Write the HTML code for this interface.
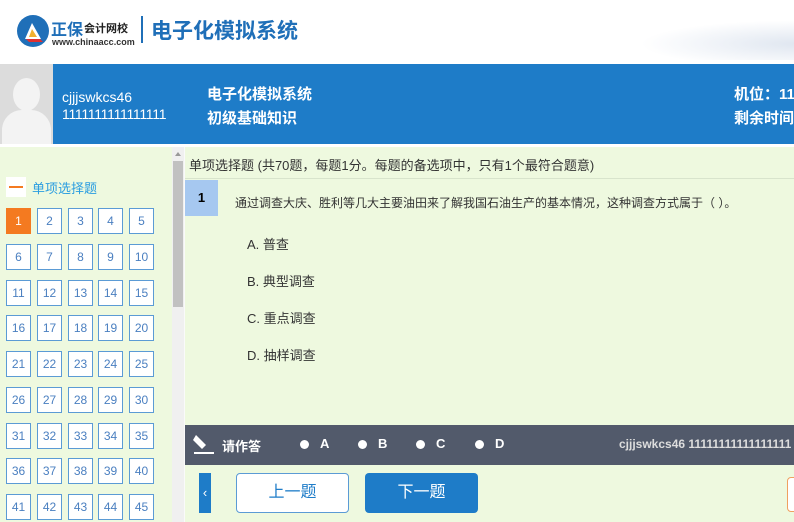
<!DOCTYPE html>
<html><head><meta charset="utf-8"><style>
*{margin:0;padding:0;box-sizing:border-box}
body{width:794px;height:522px;overflow:hidden;background:#eef9df;font-family:"Liberation Sans","Noto Sans CJK SC",sans-serif;position:relative}
.a{position:absolute}
.cell{position:absolute;width:25px;height:26px;border:1px solid #5b9bd5;background:#fff;color:#4a7fc0;font-size:12px;text-align:center;line-height:24px}
.cell.on{background:#f47a20;border-color:#f47a20;color:#fff}
.opt{position:absolute;left:247px;font-size:13px;color:#333}
.rad{position:absolute;top:440px;width:9px;height:9px;border-radius:50%;background:#fff}
.rl{position:absolute;top:436px;color:#fff;font-size:13px;font-weight:bold}
</style></head><body>
<div class="a" style="left:0;top:0;width:794px;height:64px;background:#fff"></div>
<div class="a" style="left:640px;top:20px;width:200px;height:40px;background:radial-gradient(ellipse at 80% 60%,#dfe6f0,rgba(255,255,255,0) 70%)"></div>
<svg class="a" style="left:17px;top:15px" width="32" height="32" viewBox="0 0 32 32"><circle cx="16" cy="16" r="16" fill="#1f6fb8"/><path d="M8 24 L15 8 L24 24 Z" fill="#fff"/><path d="M12 22 L15 14 L20 22Z" fill="#f0b030"/><path d="M9 24 L23 24 L26 27 L12 27Z" fill="#e03030"/></svg>
<div class="a" style="left:51px;top:16px;font-size:16px;font-weight:bold;color:#1f6fb8">正保</div>
<div class="a" style="left:84px;top:20px;font-size:11px;font-weight:bold;color:#222">会计网校</div>
<div class="a" style="left:52px;top:37px;font-size:9px;font-weight:bold;color:#333">www.chinaacc.com</div>
<div class="a" style="left:141px;top:16px;width:2px;height:27px;background:#1f6fb8"></div>
<div class="a" style="left:151px;top:15px;font-size:21px;font-weight:bold;color:#1f6fb8">电子化模拟系统</div>

<div class="a" style="left:0;top:64px;width:794px;height:80px;background:#1e7cc8"></div>
<div class="a" style="left:0;top:64px;width:53px;height:80px;background:#dcdcdc;overflow:hidden">
<div class="a" style="left:13px;top:14px;width:27px;height:33px;border-radius:50%;background:#f3f3f3"></div>
<div class="a" style="left:2px;top:46px;width:49px;height:40px;border-radius:20px 20px 0 0;background:#f3f3f3"></div></div>
<div class="a" style="left:62px;top:89px;color:#fff;font-size:14px">cjjjswkcs46</div>
<div class="a" style="left:62px;top:106px;color:#fff;font-size:14px;letter-spacing:-0.3px">1111111111111111</div>
<div class="a" style="left:207px;top:83px;color:#fff;font-size:15px;font-weight:bold">电子化模拟系统</div>
<div class="a" style="left:207px;top:107px;color:#fff;font-size:15px;font-weight:bold">初级基础知识</div>
<div class="a" style="left:734px;top:83px;color:#fff;font-size:15px;font-weight:bold;white-space:nowrap">机位：11</div>
<div class="a" style="left:734px;top:107px;color:#fff;font-size:15px;font-weight:bold;white-space:nowrap">剩余时间</div>
<div class="a" style="left:0;top:144px;width:794px;height:3px;background:#fff"></div>

<div class="a" style="left:6px;top:177px;width:20px;height:20px;background:#fff"><div class="a" style="left:3px;top:9px;width:14px;height:2px;background:#f47a20"></div></div>
<div class="a" style="left:32px;top:178px;font-size:13px;color:#2a9de0">单项选择题</div>

<div class="a" style="left:172px;top:147px;width:12px;height:375px;background:#f0f0f0"></div>
<div class="a" style="left:173px;top:161px;width:10px;height:146px;background:#c1c1c1"></div>
<div class="a" style="left:175px;top:152px;border:3px solid transparent;border-bottom:4px solid #999;border-top:none"></div>
<div class="a" style="left:184px;top:147px;width:1px;height:375px;background:#fafafa"></div>

<div class="a" style="left:189px;top:155px;font-size:13px;color:#333;white-space:nowrap">单项选择题 (共70题，每题1分。每题的备选项中，只有1个最符合题意)</div>
<div class="a" style="left:185px;top:178px;width:609px;height:1px;background:#d8e4cc"></div>
<div class="a" style="left:185px;top:180px;width:33px;height:36px;background:#a6c8f0;text-align:center;line-height:36px;font-size:13px;font-weight:bold">1</div>
<div class="a" style="left:235px;top:194px;font-size:12px;color:#333;white-space:nowrap">通过调查大庆、胜利等几大主要油田来了解我国石油生产的基本情况，这种调查方式属于（ ）。</div>
<div class="opt" style="top:234px">A. 普查</div>
<div class="opt" style="top:271px">B. 典型调查</div>
<div class="opt" style="top:308px">C. 重点调查</div>
<div class="opt" style="top:345px">D. 抽样调查</div>

<div class="a" style="left:185px;top:425px;width:609px;height:40px;background:#525a6b"></div>
<svg class="a" style="left:192px;top:432px" width="24" height="24" viewBox="0 0 24 24"><path d="M4 3 L14 13 L10 17 L1 8 Z" fill="#fff"/><path d="M2 21 H22" stroke="#fff" stroke-width="2"/></svg>
<div class="a" style="left:222px;top:436px;color:#fff;font-size:13px;font-weight:bold">请作答</div>
<div class="rad" style="left:300px"></div><div class="rl" style="left:320px">A</div>
<div class="rad" style="left:358px"></div><div class="rl" style="left:378px">B</div>
<div class="rad" style="left:416px"></div><div class="rl" style="left:436px">C</div>
<div class="rad" style="left:475px"></div><div class="rl" style="left:495px">D</div>
<div class="a" style="left:619px;top:437px;color:#ddd;font-size:12px;font-weight:bold;white-space:nowrap">cjjjswkcs46 11111111111111111</div>

<div class="a" style="left:199px;top:473px;width:12px;height:40px;background:#1e7cc8;color:#fff;font-size:13px;line-height:40px;text-align:center">‹</div>
<div class="a" style="left:236px;top:473px;width:113px;height:40px;border:1px solid #5b9bd5;border-radius:4px;background:#fff;color:#1e7cc8;font-size:16px;text-align:center;line-height:38px">上一题</div>
<div class="a" style="left:365px;top:473px;width:113px;height:40px;border-radius:4px;background:#1e7cc8;color:#fff;font-size:16px;text-align:center;line-height:40px">下一题</div>
<div class="a" style="left:787px;top:477px;width:20px;height:35px;border:1px solid #f0a060;border-radius:4px;background:#fff"></div>

<div id="g"></div>
<script>
var xs=[6,37,68,98,129],h='';
for(var i=0;i<45;i++){var r=Math.floor(i/5),c=i%5;h+='<div class="cell'+(i==0?' on':'')+'" style="left:'+xs[c]+'px;top:'+Math.round(208+r*35.75)+'px">'+(i+1)+'</div>';}
document.getElementById('g').innerHTML=h;
</script>
</body></html>
